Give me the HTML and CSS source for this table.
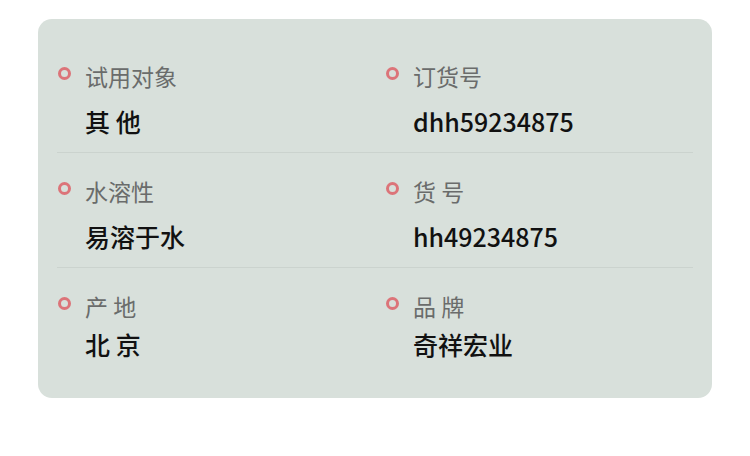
FILE: index.html
```html
<!DOCTYPE html>
<html lang="zh-CN">
<head>
    <meta charset="UTF-8">
    <meta name="viewport" content="width=device-width, initial-scale=1.0">
    <title>产品参数</title>
    <link rel="stylesheet" href="styles.css">
</head>
<body>
    <main class="params">
        <div class="param-row">
            <div class="param">
                <span class="dot"></span>
                <div class="param-text">
                    <div class="label">试用对象</div>
                    <div class="value">其 他</div>
                </div>
            </div>
            <div class="param">
                <span class="dot"></span>
                <div class="param-text">
                    <div class="label">订货号</div>
                    <div class="value">dhh59234875</div>
                </div>
            </div>
        </div>
        <div class="param-row">
            <div class="param">
                <span class="dot"></span>
                <div class="param-text">
                    <div class="label">水溶性</div>
                    <div class="value">易溶于水</div>
                </div>
            </div>
            <div class="param">
                <span class="dot"></span>
                <div class="param-text">
                    <div class="label">货 号</div>
                    <div class="value">hh49234875</div>
                </div>
            </div>
        </div>
        <div class="param-row last">
            <div class="param">
                <span class="dot"></span>
                <div class="param-text">
                    <div class="label">产 地</div>
                    <div class="value">北 京</div>
                </div>
            </div>
            <div class="param">
                <span class="dot"></span>
                <div class="param-text">
                    <div class="label">品 牌</div>
                    <div class="value">奇祥宏业</div>
                </div>
            </div>
        </div>
    </main>
</body>
</html>
```

FILE: styles.css
```css
body {
    margin: 0;
    padding: 19px 38px 0 38px;
    background: #fff;
    font-family: "Noto Sans CJK SC", "Noto Sans", sans-serif;
}
.params {
    background: #d8e0db;
    border-radius: 14px;
    padding: 19px 19px 19px 19px;
}
.param-row {
    display: grid;
    grid-template-columns: 328px 1fr;
    padding: 23px 0 16px 0;
    border-bottom: 1px solid #cbd3ce;
}
.param-row.last {
    border-bottom: none;
    padding-bottom: 20px;
}
.param {
    display: flex;
    align-items: flex-start;
}
.dot {
    width: 7px;
    height: 7px;
    border: 3px solid #dc7479;
    border-radius: 50%;
    margin: 6px 0 0 1px;
    flex-shrink: 0;
}
.param-text {
    margin-left: 14px;
}
.label {
    font-size: 23px;
    line-height: 30px;
    color: #6a6c6b;
}
.value {
    font-size: 25px;
    line-height: 30px;
    color: #111;
    font-weight: 500;
    margin-top: 15px;
}
.last .value {
    margin-top: 8px;
}
```
